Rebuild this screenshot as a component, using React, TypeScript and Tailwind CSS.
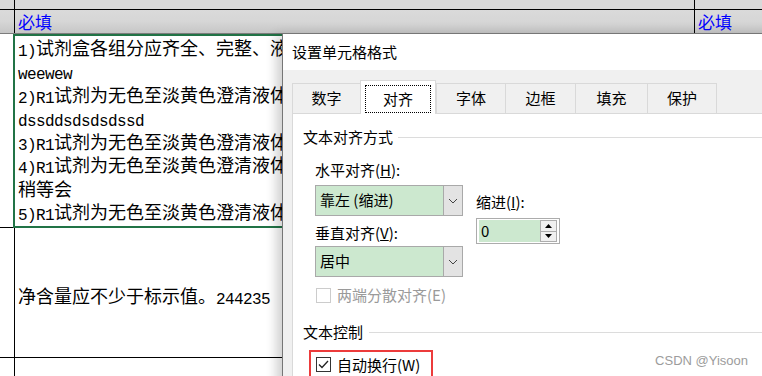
import React from "react";

function Mixed({ text }: { text: string }) {
  const parts = text.split(/([\x20-\x7e]+)/).filter(Boolean);
  return (
    <>
      {parts.map((p, i) =>
        /^[\x20-\x7e]+$/.test(p) ? (
          <span
            key={i}
            className="align-[-1px] font-['Liberation_Mono',monospace] text-[16px] leading-[20px] tracking-[-0.6px]"
          >
            {p}
          </span>
        ) : (
          <span key={i} className="leading-[20px]">
            {p}
          </span>
        )
      )}
    </>
  );
}

function Chevron() {
  return (
    <svg width="10" height="6" viewBox="0 0 10 6">
      <path d="M1 1 L5 5 L9 1" fill="none" stroke="#444" strokeWidth="1" />
    </svg>
  );
}

function Select({ value }: { value: string }) {
  return (
    <div className="flex h-[31px] w-[148px] border border-[#a9a9a9] bg-[#cce8cf]">
      <div className="flex flex-1 items-center pl-[4px] text-[15px] text-black">{value}</div>
      <div className="flex w-[19px] items-center justify-center border-l border-[#a9a9a9] bg-[#e3e3e3]">
        <Chevron />
      </div>
    </div>
  );
}

function Check({ checked, disabled }: { checked?: boolean; disabled?: boolean }) {
  return (
    <div
      className={
        "flex h-[15px] w-[15px] shrink-0 items-center justify-center border bg-white " +
        (disabled ? "border-[#cccccc]" : "border-[#333333]")
      }
    >
      {checked && (
        <svg width="11" height="9" viewBox="0 0 11 9">
          <path d="M1 4.5 L4 7.5 L10 1" fill="none" stroke="#222" strokeWidth="1.3" />
        </svg>
      )}
    </div>
  );
}

const tabs = [
  { label: "数字", w: "w-[69px]" },
  { label: "对齐", w: "w-[76px]", sel: true },
  { label: "字体", w: "w-[70px]" },
  { label: "边框", w: "w-[71px]" },
  { label: "填充", w: "w-[73px]" },
  { label: "保护", w: "w-[70px]" },
];

const lines = [
  "1)试剂盒各组分应齐全、完整、液体无渗漏",
  "weewew",
  "2)R1试剂为无色至淡黄色澄清液体",
  "dssddsdsdsdssd",
  "3)R1试剂为无色至淡黄色澄清液体",
  "4)R1试剂为无色至淡黄色澄清液体",
  "稍等会",
  "5)R1试剂为无色至淡黄色澄清液体",
];

export default function App() {
  return (
    <div className="relative h-[376px] w-[762px] overflow-hidden bg-white font-['Noto_Sans_CJK_SC',sans-serif] text-black">
      {/* row 1 */}
      <div className="flex h-[10px] border-b border-black bg-[#d9d9d9]">
        <div className="w-[15px] border-r border-black" />
        <div className="w-[680px] border-r border-black" />
        <div className="flex-1" />
      </div>
      {/* row 2 */}
      <div className="flex h-[24px] border-b border-[#7c7c7c] bg-gradient-to-b from-[#dadada] via-[#d6d6d6] to-[#c6c6c6]">
        <div className="w-[15px] border-r border-black" />
        <div className="w-[680px] border-r border-black pl-[3px] text-[17px] leading-[23px] text-[#0000ff]">必填</div>
        <div className="flex-1 pl-[3px] text-[17px] leading-[23px] text-[#0000ff]">必填</div>
      </div>
      {/* row 3 */}
      <div className="flex h-[194px]">
        <div className="w-[13px] border-b border-black" />
        <div className="flex w-[682px] flex-col overflow-hidden border-2 border-[#217346] pl-[3px] text-[18px]">
          {lines.map((l, i) => (
            <div key={i} className="flex h-[23.5px] shrink-0 items-center whitespace-nowrap">
              <div>
                <Mixed text={l} />
              </div>
            </div>
          ))}
        </div>
      </div>
      {/* row 4 */}
      <div className="flex h-[130px] border-b border-black">
        <div className="w-[15px] border-r border-black" />
        <div className="flex flex-1 items-center whitespace-nowrap pl-[3px] pt-[7px] text-[18px]">
          <div>
            <Mixed text="净含量应不少于标示值。244235" />
          </div>
        </div>
      </div>
      {/* row 5 */}
      <div className="flex h-[30px]">
        <div className="w-[15px] border-r border-black" />
      </div>

      {/* dialog */}
      <div className="absolute left-[282px] top-[33px] flex h-[400px] w-[520px] flex-col border-l border-t border-[#767676] bg-[#f0f0f0] shadow-[-6px_2px_10px_rgba(0,0,0,0.18)]">
        <div className="flex h-[36px] items-center bg-white pl-[9px] text-[15px]">设置单元格格式</div>
        <div className="flex flex-1 flex-col pl-[9px] pt-[10px]">
          <div className="flex items-end">
            {tabs.map((t) =>
              t.sel ? (
                <div
                  key={t.label}
                  className={
                    "relative z-10 -mb-px flex h-[34px] flex-col border-x border-t border-[#d9d9d9] bg-white px-[4px] pb-[1px] pt-[4px] " +
                    t.w
                  }
                >
                  <div className="flex flex-1 items-center justify-center border border-dotted border-black text-[15px]">
                    {t.label}
                  </div>
                </div>
              ) : (
                <div
                  key={t.label}
                  className={
                    "-mr-px flex h-[30px] items-center justify-center border-x border-t border-[#d9d9d9] bg-[#f0f0f0] text-[15px] " +
                    t.w
                  }
                >
                  {t.label}
                </div>
              )
            )}
          </div>
          <div className="flex flex-1 flex-col border-l border-t border-[#d9d9d9] bg-white pl-[10px] pt-[13px]">
            <div className="flex items-center">
              <span className="text-[15px] leading-[20px]">文本对齐方式</span>
              <div className="ml-[5px] h-px flex-1 bg-[#dcdcdc]" />
            </div>
            <div className="mt-[13px] flex gap-[13px] pl-[12px]">
              <div className="flex w-[148px] flex-col">
                <div className="text-[15px] leading-[20px]">
                  水平对齐(<span className="underline">H</span>):
                </div>
                <div className="mt-[5px]">
                  <Select value="靠左 (缩进)" />
                </div>
                <div className="mt-[7px] text-[15px] leading-[20px]">
                  垂直对齐(<span className="underline">V</span>):
                </div>
                <div className="mt-[3px]">
                  <Select value="居中" />
                </div>
                <div className="ml-[1px] mt-[8px] flex h-[20px] items-center gap-[6px]">
                  <Check disabled />
                  <span className="whitespace-nowrap text-[15px] text-[#9a9a9a]">两端分散对齐(E)</span>
                </div>
              </div>
              <div className="flex flex-col">
                <div className="mt-[32px] text-[15px] leading-[20px]">
                  缩进(<span className="underline">I</span>):
                </div>
                <div className="mt-[6px] flex h-[26px] w-[84px] border border-[#acacac] bg-white px-[2px] py-px">
                  <div className="flex flex-1 items-center bg-[#cce8cf] pl-[2px] text-[15px]">0</div>
                  <div className="flex w-[17px] flex-col">
                    <div className="flex flex-1 items-center justify-center border border-[#adadad] bg-[#f0f0f0]">
                      <svg width="7" height="4" viewBox="0 0 7 4">
                        <path d="M0 4 L3.5 0 L7 4 Z" fill="#000" />
                      </svg>
                    </div>
                    <div className="-mt-px flex flex-1 items-center justify-center border border-[#adadad] bg-[#f0f0f0]">
                      <svg width="7" height="4" viewBox="0 0 7 4">
                        <path d="M0 0 L7 0 L3.5 4 Z" fill="#000" />
                      </svg>
                    </div>
                  </div>
                </div>
              </div>
            </div>
            <div className="mt-[17px] flex items-center">
              <span className="text-[15px] leading-[20px]">文本控制</span>
              <div className="ml-[6px] h-px flex-1 bg-[#dcdcdc]" />
            </div>
            <div className="ml-[6px] mt-[8px] flex h-[40px] w-[124px] items-start gap-[6px] border-2 border-[#ec3b3b] pl-[5px] pt-[5px]">
              <Check checked />
              <span className="whitespace-nowrap text-[15px] leading-[16px]">自动换行(W)</span>
            </div>
          </div>
        </div>
      </div>

      <div className="absolute bottom-[6px] right-[14px] font-['Liberation_Sans',sans-serif] text-[13px] text-[#9c9c9c]">
        CSDN @Yisoon
      </div>
    </div>
  );
}
